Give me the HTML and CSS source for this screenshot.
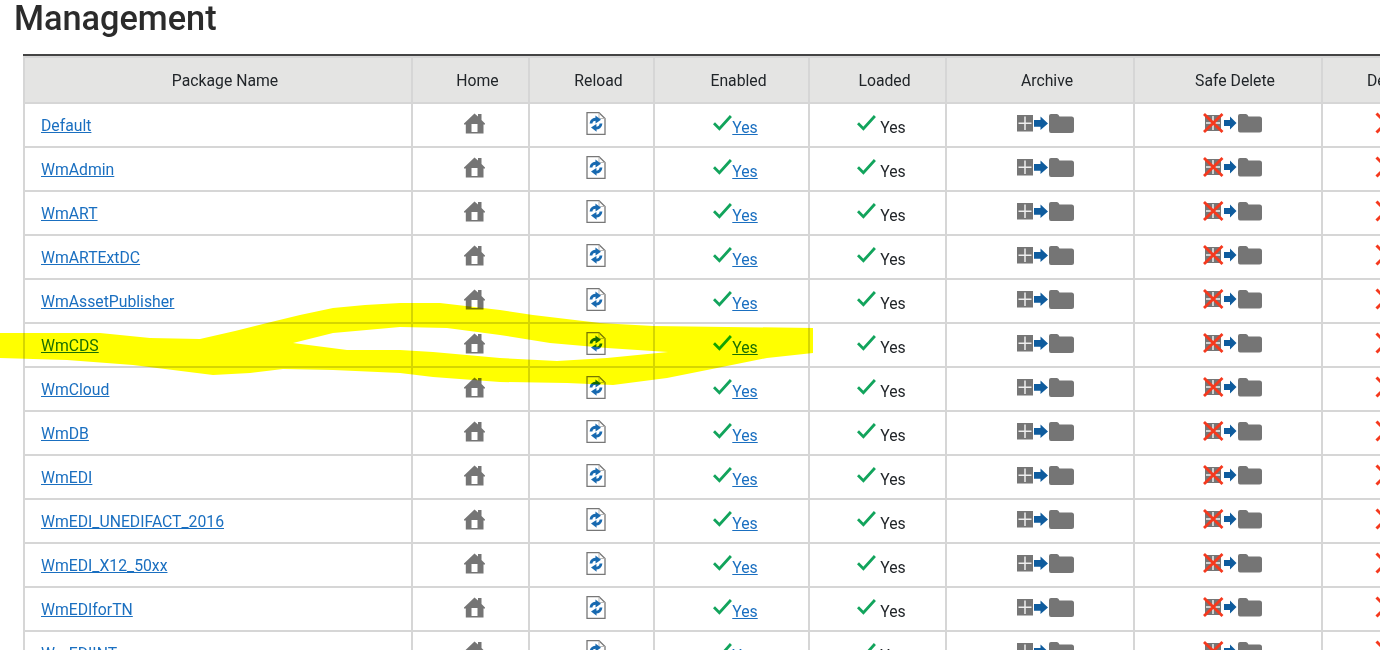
FILE: index.html
```html
<!DOCTYPE html>
<html lang="en">
<head>
<meta charset="utf-8">
<title>Management</title>
<link rel="stylesheet" href="styles.css">
</head>
<body>
<svg class="defs" width="0" height="0" aria-hidden="true">
  <defs>
    <symbol id="i-home" viewBox="0 0 21 21">
      <path fill="#757575" fill-rule="evenodd" d="M10.500 0.500 L14 3.600 V1 H17.500 V7 L21 10.500 V11.500 H19.500 V20.500 H1.800 V11.500 H0 V10.500 Z M7.500 11 V19 H13.500 V11 Z"/>
    </symbol>
    <symbol id="i-reload" viewBox="0 0 20 23">
      <path fill="#fff" stroke="#777" stroke-width="1.300" d="M1 .7 H13 L19 6.500 V22.300 H1 Z"/>
      <path fill="none" stroke="#b8b8b8" stroke-width="1" d="M13 1 V6.500 H18.700"/>
      <path fill="none" stroke="#1769b0" stroke-width="2.800" d="M5 11.500 C5.200 8.500 7.500 7 10.800 7.300"/>
      <path fill="#1769b0" d="M9.400 3.600 L15 7.800 L9.600 11.400 Z"/>
      <path fill="none" stroke="#1769b0" stroke-width="2.800" d="M15 11.500 C14.800 14.800 12.500 16.300 9.200 16"/>
      <path fill="#1769b0" d="M10.600 19.700 L5 15.500 L10.400 11.900 Z"/>
    </symbol>
    <symbol id="i-check" viewBox="0 0 19 16">
      <path fill="none" stroke="#12a45c" stroke-width="2.800" d="M1 8.300 L6.400 13.800 L17.900 1"/>
    </symbol>
    <symbol id="i-archive" viewBox="0 0 57 19">
      <rect x="0" y="1" width="16" height="16.500" fill="#757575"/>
      <path stroke="#eee" stroke-width="1.500" d="M8 2.500 V16 M1.500 9.250 H14.500"/>
      <path fill="#0f5c9e" d="M17 6 H23.500 V2.500 L31 9.500 L23.500 16 V12.800 H17 Z"/>
      <path fill="#757575" d="M32 2 Q32 0 34 0 H40 Q41.500 0 42.500 2.500 H54.500 Q57 2.500 57 5 V16.500 Q57 19 54.500 19 H34 Q32 19 32 16.500 Z"/>
    </symbol>
    <symbol id="i-safe" viewBox="0 0 59 20">
      <rect x="2" y="2" width="16" height="16" fill="#757575"/>
      <path stroke="#eee" stroke-width="1.500" d="M10 3 V17 M3 10 H17"/>
      <path stroke="#f5391e" stroke-width="2.800" d="M1 1 L19.500 19 M19.500 1 L1 19"/>
      <path fill="#0f5c9e" d="M21 7 H27 V3.500 L33.500 10 L27 16.500 V13 H21 Z"/>
      <path fill="#757575" d="M35 3 Q35 1 37 1 H43 Q44.500 1 45.500 3.500 H56.500 Q59 3.500 59 6 V17 Q59 19.500 56.500 19.500 H37 Q35 19.500 35 17 Z"/>
    </symbol>
    <symbol id="i-x" viewBox="0 0 22 22">
      <path stroke="#f5391e" stroke-width="3" d="M1.500 1.500 L20.500 20.500 M20.500 1.500 L1.500 20.500"/>
    </symbol>
  </defs>
</svg>

<h1 class="title">Management</h1>

<div class="table-wrap">
  <table class="packages">
    <colgroup>
      <col class="c-name"><col class="c-home"><col class="c-reload"><col class="c-enabled"><col class="c-loaded"><col class="c-archive"><col class="c-safe"><col class="c-delete">
    </colgroup>
    <thead>
      <tr>
        <th>Package Name</th><th>Home</th><th>Reload</th><th>Enabled</th><th>Loaded</th><th>Archive</th><th>Safe Delete</th><th class="th-delete">Delete</th>
      </tr>
    </thead>
    <tbody id="rows"></tbody>
  </table>
</div>

<svg class="marker" viewBox="0 0 1380 650" width="1380" height="650" aria-hidden="true">
  <path fill="#ffff00" fill-rule="evenodd" d="M0 333 L100 333 L150 338 L200 339 L235 331 L267 323 L300 315 L333 308 L365 305 L400 303 L440 303 L500 310 L533 315 L600 323 L653 326 L813 328 L813 353 L767 358 L717 368 L667 378 L613 385 L567 383 L500 382 L433 377 L400 373 L333 370 L283 369 L250 373 L213 375 L173 370 L133 365 L67 360 L0 358 Z M293 343 L347 350 L400 350 L433 352 L500 358 L557 361 L607 358 L668 352 L607 348 L550 343 L500 335 L447 328 L400 327 L333 333 Z"/>
</svg>

<script src="rows.js"></script>
</body>
</html>
```

FILE: rows.js
```js
var names = ["Default","WmAdmin","WmART","WmARTExtDC","WmAssetPublisher","WmCDS","WmCloud","WmDB","WmEDI","WmEDI_UNEDIFACT_2016","WmEDI_X12_50xx","WmEDIforTN","WmEDIINT"];
function icon(id, cls) {
  return '<svg class="icon ' + cls + '"><use href="#' + id + '"></use></svg>';
}
document.getElementById("rows").innerHTML = names.map(function (n) {
  return '<tr>' +
    '<td class="name"><a href="#">' + n + '</a></td>' +
    '<td>' + icon("i-home", "home") + '</td>' +
    '<td>' + icon("i-reload", "reload") + '</td>' +
    '<td>' + icon("i-check", "check") + '<a class="yes" href="#">Yes</a></td>' +
    '<td>' + icon("i-check", "check") + '<span class="yes plain">Yes</span></td>' +
    '<td>' + icon("i-archive", "archive") + '</td>' +
    '<td>' + icon("i-safe", "safe") + '</td>' +
    '<td class="td-delete">' + icon("i-x", "x") + '</td>' +
    '</tr>';
}).join("");
```

FILE: styles.css
```css
html, body {
  margin: 0;
  height: 650px;
  overflow: hidden;
  background: #fff;
}
body {
  position: relative;
  width: 1380px;
  font-family: Roboto, "Liberation Sans", sans-serif;
  font-size: 15.75px;
  color: #212529;
}
.defs { position: absolute; }
.title {
  margin: 0;
  padding: 0 0 0 14px;
  height: 54px;
  font-size: 34.3px;
  line-height: 36px;
  font-weight: 500;
  color: #2b2b2b;
}
.table-wrap {
  margin-left: 23px;
  width: 1500px;
  border-top: 2px solid #444;
}
.packages {
  border-collapse: collapse;
  table-layout: fixed;
  width: 1426px;
}
.c-name { width: 388px; }
.c-home { width: 117px; }
.c-reload { width: 125px; }
.c-enabled { width: 155px; }
.c-loaded { width: 137px; }
.c-archive { width: 188px; }
.c-safe { width: 188px; }
.c-delete { width: 128px; }
.packages th, .packages td {
  border: 2px solid #d6d6d6;
  text-align: center;
  vertical-align: middle;
}
.packages th {
  height: 44px;
  padding: 0 0 0 14px;
  background: #e4e4e3;
  font-weight: 400;
  color: #212529;
}
.packages td {
  height: 42px;
  padding: 0 0 0 8px;
}
.packages .th-delete {
  text-align: left;
  padding-left: 44px;
}
.packages .name {
  text-align: left;
  padding-left: 16px;
}
.packages .td-delete { padding-left: 0; }
a { color: #1a6fc0; }
.icon {
  display: inline-block;
  vertical-align: middle;
  position: relative;
  top: -2px;
}
.home { width: 21px; height: 21px; }
.reload { width: 20px; height: 23px; }
.check { width: 19px; height: 16px; top: -3px; }
.archive { width: 57px; height: 19px; margin-left: 3px; }
.safe { width: 59px; height: 20px; }
.x { width: 22px; height: 22px; }
.yes {
  position: relative;
  top: 2px;
}
.plain { margin-left: 4px; color: #212529; }
.marker {
  position: absolute;
  left: 0;
  top: 0;
  mix-blend-mode: multiply;
  pointer-events: none;
}
```
